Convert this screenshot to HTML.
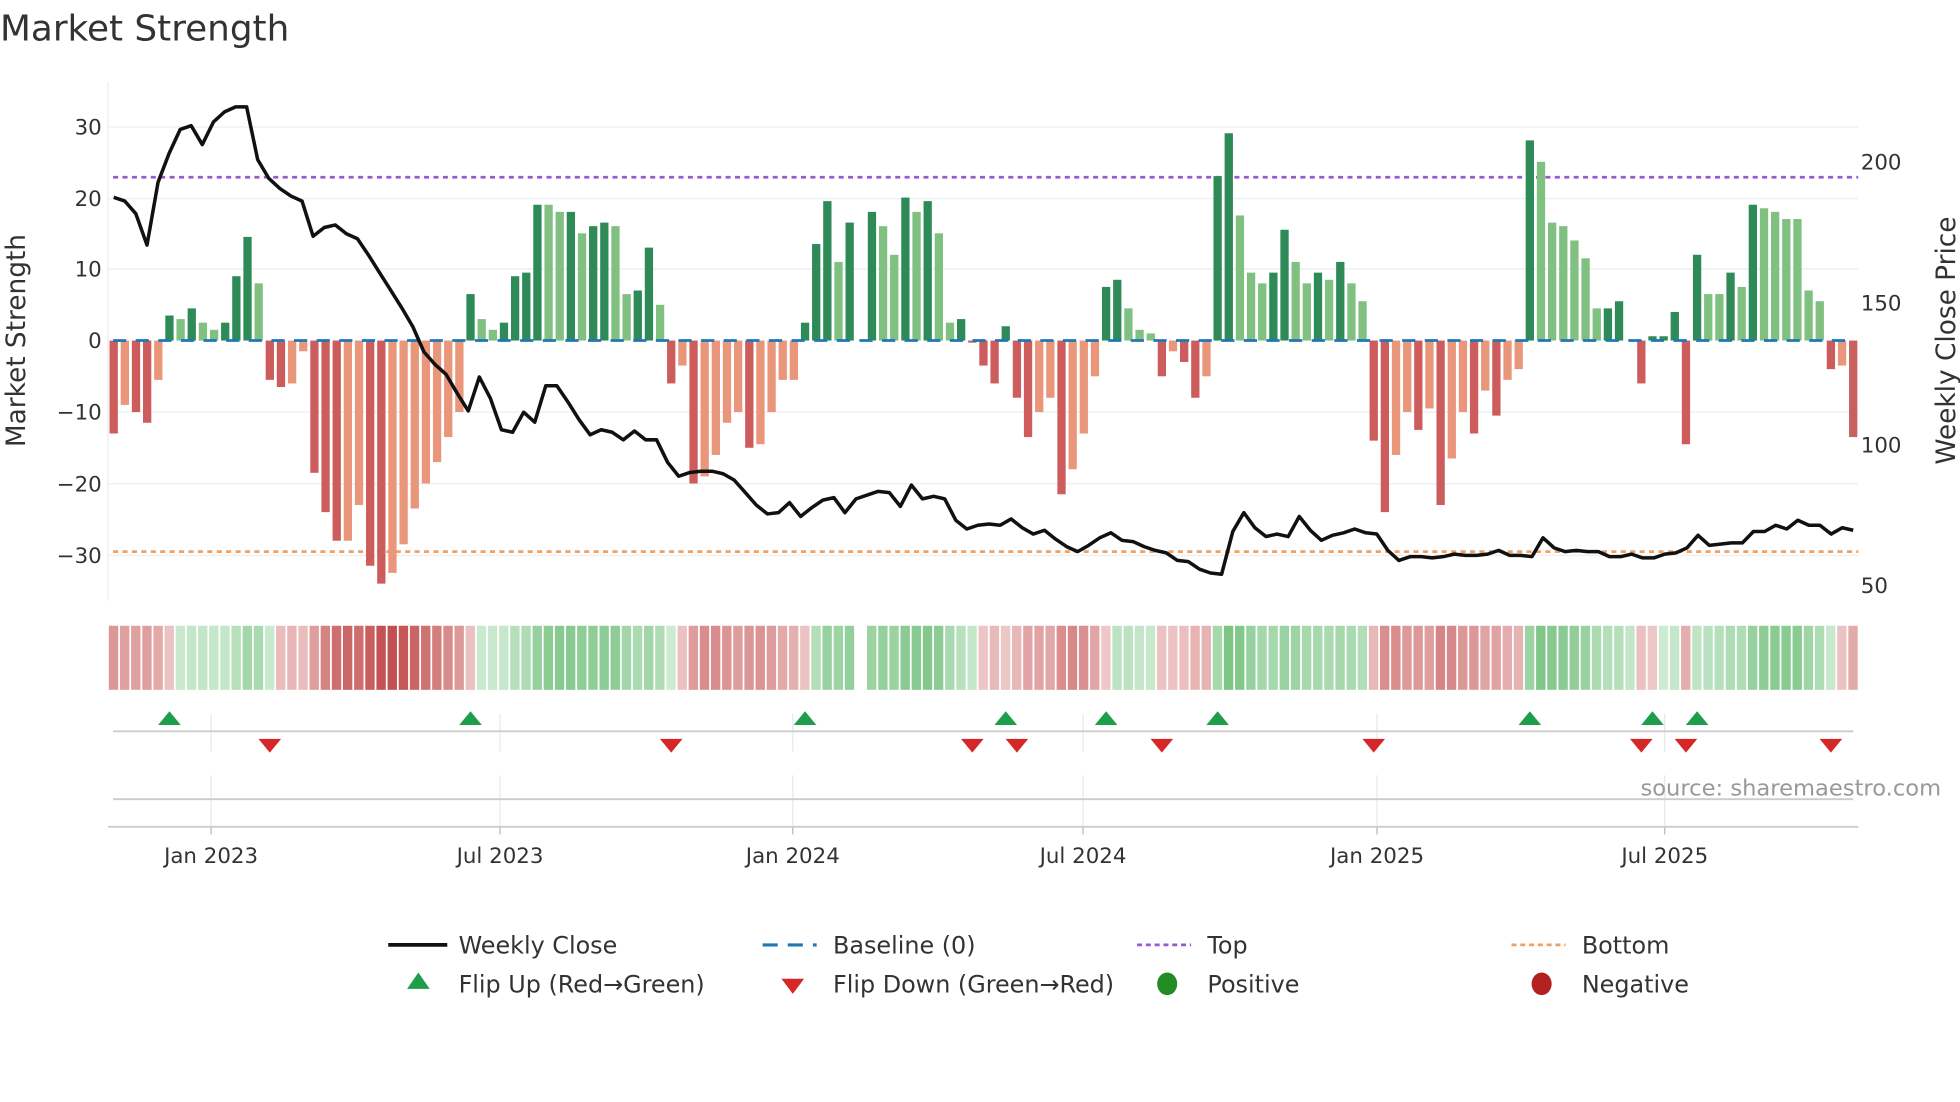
<!DOCTYPE html>
<html><head><meta charset="utf-8">
<style>
html,body{margin:0;padding:0;background:#fff;}
svg{display:block;}
text{font-family:"DejaVu Sans","Liberation Sans",sans-serif;fill:#333;}
</style></head>
<body>
<svg id="s" width="1960" height="1102" viewBox="0 0 1560 877" xmlns="http://www.w3.org/2000/svg">
<rect width="1560" height="877" fill="#fff"/>
<g id="grid"></g>
<g id="bars"></g>
<g id="heat"></g>
<g id="marks"></g>
<text x="0" y="32" font-size="28.5">Market Strength</text>
<g font-size="17" text-anchor="end">
<text x="81" y="107">30</text>
<text x="81" y="164">20</text>
<text x="81" y="220">10</text>
<text x="81" y="277">0</text>
<text x="81" y="334">−10</text>
<text x="81" y="391">−20</text>
<text x="81" y="448">−30</text>
</g>
<g font-size="17">
<text x="1481" y="135">200</text>
<text x="1481" y="247">150</text>
<text x="1481" y="360">100</text>
<text x="1481" y="472">50</text>
</g>
<text transform="translate(20,271) rotate(-90)" font-size="21" text-anchor="middle">Market Strength</text>
<text transform="translate(1556,271) rotate(-90)" font-size="21" text-anchor="middle">Weekly Close Price</text>
<g font-size="17" text-anchor="middle">
<text x="168" y="687">Jan 2023</text>
<text x="398" y="687">Jul 2023</text>
<text x="631" y="687">Jan 2024</text>
<text x="862" y="687">Jul 2024</text>
<text x="1096" y="687">Jan 2025</text>
<text x="1325" y="687">Jul 2025</text>
</g>
<text x="1545" y="633" font-size="18" text-anchor="end" style="fill:#999">source: sharemaestro.com</text>
<g font-size="19">
<line x1="309" y1="752" x2="356" y2="752" stroke="#111" stroke-width="3"/>
<text x="365" y="759">Weekly Close</text>
<line x1="607" y1="752" x2="650" y2="752" stroke="#1f77b4" stroke-width="2.5" stroke-dasharray="12,8"/>
<text x="663" y="759">Baseline (0)</text>
<line x1="905" y1="752" x2="948" y2="752" stroke="#9b59d0" stroke-width="2.2" stroke-dasharray="4,3"/>
<text x="961" y="759">Top</text>
<line x1="1203" y1="752" x2="1246" y2="752" stroke="#f0a060" stroke-width="2.2" stroke-dasharray="4,3"/>
<text x="1259" y="759">Bottom</text>
<polygon points="333,774 342,787 324,787" fill="#1e9e4a"/>
<text x="365" y="790">Flip Up (Red→Green)</text>
<polygon points="622,779 640,779 631,791" fill="#d62728"/>
<text x="663" y="790">Flip Down (Green→Red)</text>
<ellipse cx="929" cy="783" rx="8" ry="9" fill="#228b22"/>
<text x="961" y="790">Positive</text>
<ellipse cx="1227" cy="783" rx="8" ry="9" fill="#b22222"/>
<text x="1259" y="790">Negative</text>
</g>
</svg>
<script>
var NS="http://www.w3.org/2000/svg";
function el(p,t,a){var e=document.createElementNS(NS,t);for(var k in a)e.setAttribute(k,a[k]);document.getElementById(p).appendChild(e);return e;}
[101,158,214,328,385,442].forEach(function(y){el("grid","line",{x1:86,y1:y,x2:1479,y2:y,stroke:"#eef0f5","stroke-width":1.2});});
el("grid","line",{x1:86,y1:65,x2:86,y2:478,stroke:"#eef0f5","stroke-width":1.2});
[168,398,631,862,1096,1325].forEach(function(x){
 el("grid","line",{x1:x,y1:568,x2:x,y2:598,stroke:"#e6e8ee","stroke-width":1});
 el("grid","line",{x1:x,y1:617,x2:x,y2:664,stroke:"#e6e8ee","stroke-width":1});
 el("grid","line",{x1:x,y1:658,x2:x,y2:664,stroke:"#bbb","stroke-width":1});
});
el("grid","line",{x1:90,y1:582,x2:1475,y2:582,stroke:"#ccc","stroke-width":1.5});
el("grid","line",{x1:90,y1:636,x2:1475,y2:636,stroke:"#ccc","stroke-width":1.5});
el("grid","line",{x1:86,y1:658,x2:1479,y2:658,stroke:"#ccc","stroke-width":1.5});
el("grid","line",{x1:90,y1:141,x2:1479,y2:141,stroke:"#9b59d0","stroke-width":2.2,"stroke-dasharray":"4,3.5"});
el("grid","line",{x1:90,y1:439,x2:1479,y2:439,stroke:"#f0a060","stroke-width":2.2,"stroke-dasharray":"4,3.5"});
var B=[[-13,1],[-9,0],[-10,1],[-11.5,1],[-5.5,0],[3.5,1],[3,0],[4.5,1],[2.5,0],[1.5,0],[2.5,1],[9,1],[14.5,1],[8,0],
[-5.5,1],[-6.5,1],[-6,0],[-1.5,0],[-18.5,1],[-24,1],[-28,1],[-28,0],[-23,0],[-31.5,1],[-34,1],[-32.5,0],[-28.5,0],[-23.5,0],[-20,0],[-17,0],[-13.5,0],[-10,0],
[6.5,1],[3,0],[1.5,0],[2.5,1],[9,1],[9.5,1],[19,1],[19,0],[18,0],[18,1],[15,0],[16,1],[16.5,1],[16,0],[6.5,0],[7,1],[13,1],[5,0],
[-6,1],[-3.5,0],[-20,1],[-19,0],[-16,0],[-11.5,0],[-10,0],[-15,1],[-14.5,0],[-10,0],[-5.5,0],[-5.5,0],
[2.5,1],[13.5,1],[19.5,1],[11,0],[16.5,1],[0,1],[18,1],[16,0],[12,0],[20,1],[18,0],[19.5,1],[15,0],[2.5,0],[3,1],
[-0.3,1],[-3.5,1],[-6,1],[2,1],[-8,1],[-13.5,1],[-10,0],[-8,0],[-21.5,1],[-18,0],[-13,0],[-5,0],
[7.5,1],[8.5,1],[4.5,0],[1.5,0],[1,0],[-5,1],[-1.5,0],[-3,1],[-8,1],[-5,0],
[23,1],[29,1],[17.5,0],[9.5,0],[8,0],[9.5,1],[15.5,1],[11,0],[8,0],[9.5,1],[8.5,0],[11,1],[8,0],[5.5,0],
[-14,1],[-24,1],[-16,0],[-10,0],[-12.5,1],[-9.5,0],[-23,1],[-16.5,0],[-10,0],[-13,1],[-7,0],[-10.5,1],[-5.5,0],[-4,0],
[28,1],[25,0],[16.5,0],[16,0],[14,0],[11.5,0],[4.5,0],[4.5,1],[5.5,1],[0,1],[-6,1],[0.6,1],[0.6,1],[4,1],[-14.5,1],
[12,1],[6.5,0],[6.5,0],[9.5,1],[7.5,0],[19,1],[18.5,0],[18,0],[17,0],[17,0],[7,0],[5.5,0],[-4,1],[-3.5,0],[-13.5,1]];
var Z=271,S=5.69,DX=8.875,X0=90.5;
var ema=0;
B.forEach(function(b,i){
 var v=b[0],x=X0+i*DX,h=Math.abs(v)*S,c;
 if(v>=0)c=b[1]?"#2e8b57":"#80c080";else c=b[1]?"#cd5c5c":"#e9967a";
 if(i==156)c="#c86060";
 if(v!=0)el("bars","rect",{x:x-3.3,y:v>0?Z-h:Z,width:6.6,height:h,fill:c});
 ema = i==0? v : ema*0.45+v*0.55;
 if(i==67)return;
 var a=Math.min(Math.abs(ema)/32,1), col;
 if(ema>=0){var r=Math.round(205-(205-80)*a),g=Math.round(235-(235-175)*a),bb=Math.round(210-(210-90)*a);col="rgb("+r+","+g+","+bb+")";}
 else{var r2=Math.round(238-(238-195)*a),g2=Math.round(200-(200-80)*a),b2=Math.round(200-(200-80)*a);col="rgb("+r2+","+g2+","+b2+")";}
 el("heat","rect",{x:86+i*DX+0.6,y:498,width:DX-1.4,height:51,fill:col});
});
el("bars","line",{x1:90,y1:Z,x2:1476,y2:Z,stroke:"#1f77b4","stroke-width":2.2,"stroke-dasharray":"10.5,7.5"});
var P=[157,160,170,195,145,122,103,100,115,97,89,85,85,127,142,150,156,160,188,181,179,186,190,203,217,231,245,260,280,290,298,313,327,300,317,342,344,328,336,307,307,320,334,346,342,344,350,343,350,350,368,379,376,375,375,377,382,392,402,409,408,400,411,404,398,396,408,397,394,391,392,403,386,397,395,397,414,421,418,417,418,413,420,425,422,429,435,439,434,428,424,430,431,435,438,440,446,447,453,456,457,423,408,420,427,425,427,411,422,430,426,424,421,424,425,438,446,443,443,444,443,441,442,442,441,438,442,442,443,428,436,439,438,439,439,443,443,441,444,444,441,440,436,426,434,433,432,432,423,423,418,421,414,418,418,425,420,422];
var pts=P.map(function(y,i){return (X0+i*DX*156/157).toFixed(1)+","+y;}).join(" ");
el("bars","polyline",{points:pts,fill:"none",stroke:"#111","stroke-width":2.8,"stroke-linejoin":"round"});
[5,32,62,80,89,99,127,138,142].forEach(function(i){var x=X0+i*DX;el("marks","polygon",{points:(x)+",566 "+(x+9)+",577 "+(x-9)+",577",fill:"#1e9e4a"});});
[14,50,77,81,94,113,137,141,154].forEach(function(i){var x=X0+i*DX;el("marks","polygon",{points:(x-9)+",588 "+(x+9)+",588 "+x+",599",fill:"#d62728"});});
</script>
</body></html>
